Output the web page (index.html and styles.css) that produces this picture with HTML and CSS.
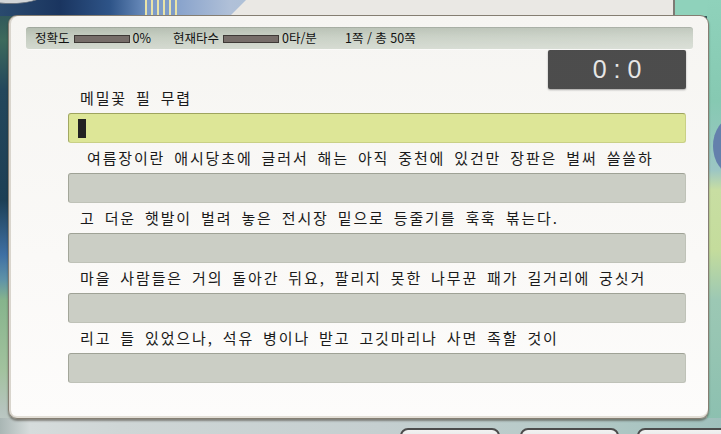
FILE: index.html
```html
<!DOCTYPE html>
<html lang="ko">
<head>
<meta charset="utf-8">
<title>타자 연습 - 메밀꽃 필 무렵</title>
<link rel="stylesheet" href="styles.css">
</head>
<body>
<div class="desk">
  <div class="bg-top">
    <div class="bg-blob"></div>
    <div class="bg-stripes"></div>
    <div class="bg-panel"></div>
  </div>
  <div class="bg-right"><div class="bg-orb"></div></div>
  <div class="bg-bottom">
    <div class="bg-btn b1"></div>
    <div class="bg-btn b2"></div>
    <div class="bg-btn b3"></div>
  </div>

  <main class="window">
    <div class="stats">
      <div class="stat s-acc"><span>정확도</span><span class="meter"></span><span>0%</span></div>
      <div class="stat s-speed"><span>현재타수</span><span class="meter"></span><span>0타/분</span></div>
      <div class="stat s-page"><span>1쪽 / 총 50쪽</span></div>
    </div>
    <div class="timer-row"><div class="timer">0 : 0</div></div>
    <div class="lines">
      <div class="label">메밀꽃 필 무렵</div>
      <div class="field active"><span class="cursor"></span></div>
      <div class="label indent">여름장이란 애시당초에 글러서 해는 아직 중천에 있건만 장판은 벌써 쓸쓸하</div>
      <div class="field"></div>
      <div class="label">고 더운 햇발이 벌려 놓은 전시장 밑으로 등줄기를 훅훅 볶는다.</div>
      <div class="field"></div>
      <div class="label">마을 사람들은 거의 돌아간 뒤요, 팔리지 못한 나무꾼 패가 길거리에 궁싯거</div>
      <div class="field"></div>
      <div class="label">리고 들 있었으나, 석유 병이나 받고 고깃마리나 사면 족할 것이</div>
      <div class="field"></div>
    </div>
  </main>
</div>
</body>
</html>
```
FILE: styles.css
```css
* { box-sizing: border-box; }
html, body { margin: 0; padding: 0; }
body {
  width: 721px;
  height: 434px;
  overflow: hidden;
  font-family: "Noto Sans CJK KR", "Noto Sans", sans-serif;
  color: #1b1b1b;
}

.desk {
  position: relative;
  width: 721px;
  height: 434px;
  overflow: hidden;
  padding: 15px 12px 0 8px;
  background: linear-gradient(to bottom,
    #2a4d5a 0px, #3d6a5c 40px, #23475c 90px, #1c3f55 200px,
    #3f70a4 255px, #5f93a8 280px, #86b48c 300px, #a2c29e 370px,
    #b6c4be 410px, #c5cdcb 434px);
}

/* ---------- backdrop ---------- */
.bg-top {
  position: absolute;
  top: 0; left: 0;
  width: 721px; height: 16px;
  background: linear-gradient(to right,
    #2a4a6e 0px, #1a3560 60px, #2e5488 110px, #6a8cbc 145px,
    #8aa4cc 180px, #b0c0d8 230px, #8fd2bb 670px, #8fd2bb 721px);
}
.bg-blob {
  position: absolute;
  left: -20px; top: -14px;
  width: 62px; height: 18px;
  border-radius: 50%;
  background: #d2d5d8;
  border: 1px solid #6d7680;
}
.bg-stripes {
  position: absolute;
  left: 145px; top: 0;
  width: 32px; height: 16px;
  background: repeating-linear-gradient(to right,
    #e9e3a8 0px, #e9e3a8 2px, #7f9cc8 2px, #7f9cc8 6px);
}
.bg-panel {
  position: absolute;
  left: 230px; top: 0;
  width: 445px; height: 16px;
  background: #eae8e4;
  border-right: 2px solid #7d7a74;
  clip-path: polygon(16px 0, 100% 0, 100% 100%, 0 100%);
}
.bg-right {
  position: absolute;
  top: 0; right: 0;
  width: 14px; height: 434px;
  background: linear-gradient(to bottom,
    #8fd2bb 0px, #86c9b2 100px, #9cc6c4 170px, #c8dea2 190px,
    #c4dc9c 250px, #9cc8b4 300px, #8cc0b0 420px, #9cb8b4 434px);
}
.bg-orb {
  position: absolute;
  left: 6px; top: 118px;
  width: 40px; height: 56px;
  border-radius: 50%;
  background: #6480ac;
}
.bg-bottom {
  position: absolute;
  left: 0; bottom: 0;
  width: 721px; height: 16px;
  background: linear-gradient(to right,
    #a9b6b4 0px, #d6dcdc 30px, #cfd6d6 120px, #c5cfd0 380px,
    #b6cac8 560px, #9fc0bc 721px);
}
.bg-btn {
  position: absolute;
  top: 10px;
  height: 20px;
  border: 2px solid #4c4c4c;
  border-radius: 8px;
  background: linear-gradient(#f2f2f2, #dadada);
}
.b1 { left: 400px; width: 100px; }
.b2 { left: 520px; width: 99px; }
.b3 { left: 637px; width: 100px; }

/* ---------- window ---------- */
.window {
  position: relative;
  z-index: 1;
  width: 701px;
  height: 404px;
  border: 1px solid #857e72;
  border-radius: 9px;
  background: linear-gradient(to bottom, #f6f5f2 0%, #faf9f7 60%, #fdfcfb 100%);
  box-shadow: inset 2px 0 0 #d9d5cd, inset 0 -2px 0 #e2ded6, 0 2px 2px rgba(40, 30, 20, .45);
  padding: 11px 15px 0 17px;
}

.stats {
  height: 22px;
  display: flex;
  align-items: center;
  padding-left: 9px;
  border-radius: 3px;
  background:
    linear-gradient(to right, rgba(255, 255, 255, 0) 0%, rgba(255, 255, 255, .18) 100%),
    linear-gradient(to bottom, #b3bcaf 0%, #c5cdc1 45%, #d3d9cf 100%);
  box-shadow: inset 0 1px 0 rgba(0, 0, 0, .1), 0 1px 0 rgba(255, 255, 255, .6);
  font-size: 12.5px;
  line-height: 22px;
  color: #111111;
}
.stat { display: flex; align-items: center; }
.s-acc { width: 138px; }
.s-speed { width: 172px; }
.meter {
  width: 56px;
  height: 8px;
  margin: 1px 3px 0 4px;
  background: #766d69;
  border: 1px solid #3e3936;
}

.timer-row {
  display: flex;
  justify-content: flex-end;
  margin-top: 1px;
  margin-right: 7px;
  margin-bottom: -6px;
}
.timer {
  width: 138px;
  height: 39px;
  border-radius: 2px;
  background-color: #3a3a3a;
  background-image: radial-gradient(circle, #4d4d4d 0.7px, transparent 0.9px);
  background-size: 2px 2px;
  box-shadow: 0 1px 2px rgba(0, 0, 0, .35);
  color: #e6e6e6;
  font-family: "Liberation Sans", "DejaVu Sans", sans-serif;
  font-size: 25px;
  line-height: 39px;
  text-align: center;
}

.lines {
  padding-left: 42px;
  margin-right: 7px;
}
.label {
  height: 30px;
  line-height: 30px;
  padding-left: 12px;
  font-size: 15px;
  letter-spacing: 1.85px;
  word-spacing: 3px;
  white-space: nowrap;
  color: #1a1a1a;
}
.label.indent { padding-left: 19px; }

.field {
  height: 30px;
  display: flex;
  align-items: center;
  padding-left: 9px;
  border-radius: 3px;
  background: #cbcec5;
  border: 1px solid #bfc2b8;
  border-top-color: #9fa296;
  border-left-color: #a3a69a;
}
.field.active {
  background: #dde697;
  border-color: #c9d086;
  border-top-color: #9ea45e;
  border-left-color: #a2a862;
}
.cursor {
  width: 8px;
  height: 19px;
  background: #222222;
}
```
